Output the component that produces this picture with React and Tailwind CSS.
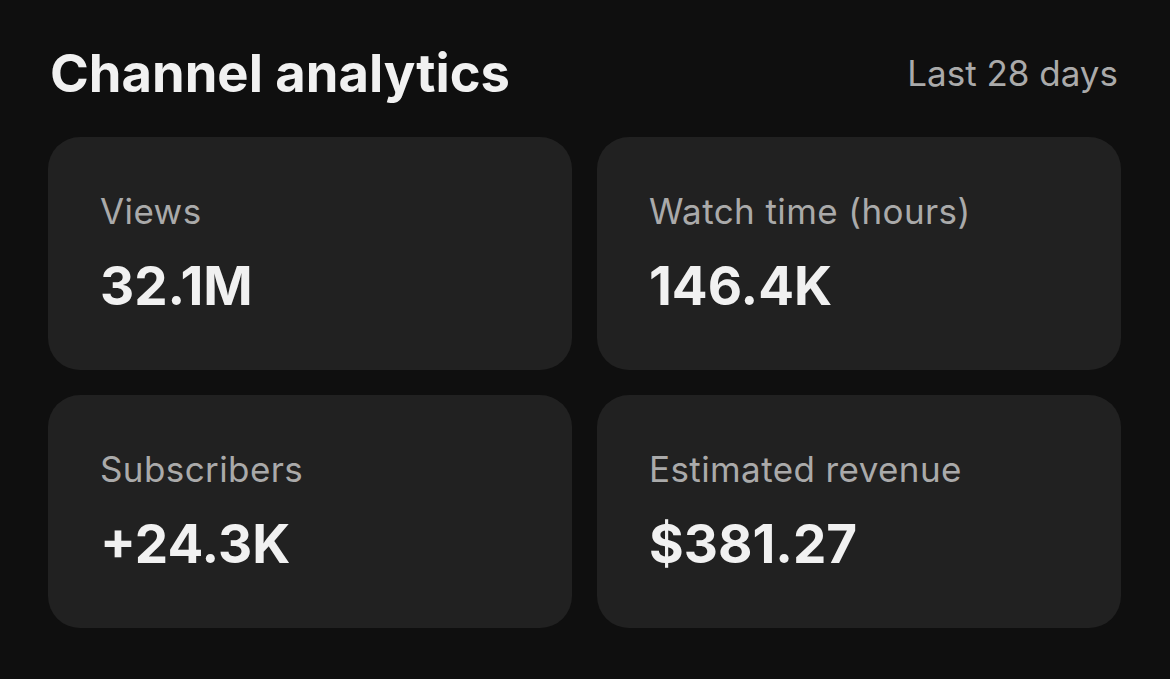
import React from 'react'

const stats = [
  { label: 'Views', value: '32.1M' },
  { label: 'Watch time (hours)', value: '146.4K' },
  { label: 'Subscribers', value: '+24.3K' },
  { label: 'Estimated revenue', value: '$381.27' },
]

export default function App() {
  return (
    <div
      className="w-[1170px] h-[679px] bg-[#0f0f0f] pl-[48px] pr-[49px] pt-[43px]"
      style={{ fontFamily: 'Inter, "Noto Sans", sans-serif' }}
    >
      {/* Header */}
      <div className="flex items-start justify-between pl-[2px] pr-[3px]">
        <h1 className="text-[52.5px] leading-[60px] font-bold text-[#f1f1f1]">
          Channel analytics
        </h1>
        <span className="mt-[9px] text-[35px] leading-[42px] text-[#aaaaaa]">Last 28 days</span>
      </div>

      {/* Stat cards */}
      <div className="mt-[34px] grid grid-cols-2 gap-[25px]">
        {stats.map(s => (
          <div key={s.label} className="h-[233px] rounded-[32px] bg-[#212121] pl-[52px] pt-[50px]">
            <div className="text-[35px] leading-[48px] tracking-[0.4px] text-[#aaaaaa]">{s.label}</div>
            <div className="mt-[21px] text-[53px] leading-[60px] font-bold text-[#f1f1f1]">
              {s.value}
            </div>
          </div>
        ))}
      </div>
    </div>
  )
}
